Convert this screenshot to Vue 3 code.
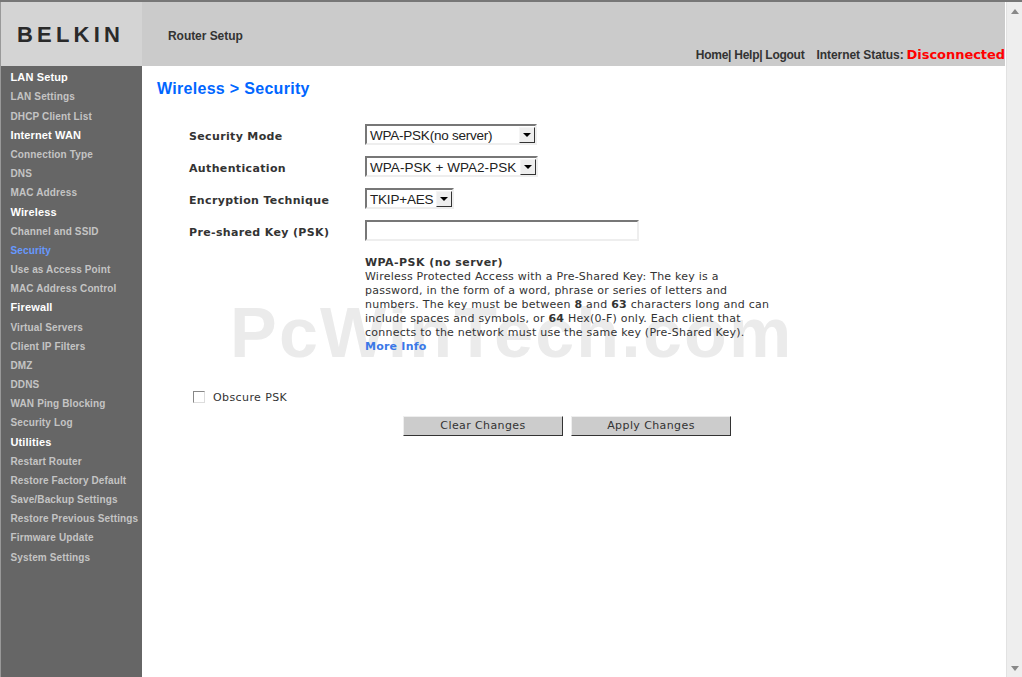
<script setup>
const nav = [
  { t: 'LAN Setup', h: 1 }, { t: 'LAN Settings' }, { t: 'DHCP Client List' },
  { t: 'Internet WAN', h: 1 }, { t: 'Connection Type' }, { t: 'DNS' }, { t: 'MAC Address' },
  { t: 'Wireless', h: 1 }, { t: 'Channel and SSID' }, { t: 'Security', a: 1 }, { t: 'Use as Access Point' }, { t: 'MAC Address Control' },
  { t: 'Firewall', h: 1 }, { t: 'Virtual Servers' }, { t: 'Client IP Filters' }, { t: 'DMZ' }, { t: 'DDNS' }, { t: 'WAN Ping Blocking' }, { t: 'Security Log' },
  { t: 'Utilities', h: 1 }, { t: 'Restart Router' }, { t: 'Restore Factory Default' }, { t: 'Save/Backup Settings' }, { t: 'Restore Previous Settings' }, { t: 'Firmware Update' }, { t: 'System Settings' }
]
const selects = [
  { label: 'Security Mode', value: 'WPA-PSK(no server)', w: 172, ls: -0.23 },
  { label: 'Authentication', value: 'WPA-PSK + WPA2-PSK', w: 173, ls: 0.05 },
  { label: 'Encryption Technique', value: 'TKIP+AES', w: 89, ls: -0.2 }
]
</script>

<template>
  <div class="page">
    <div class="frame">
      <header class="top">
        <div class="logo">BELKIN</div>
        <div class="title">Router Setup</div>
        <div class="links">
          <span class="nav">Home| Help| Logout</span>
          <span class="status">Internet Status:</span>
          <b class="disc">Disconnected</b>
        </div>
      </header>
      <div class="body">
        <nav class="side">
          <a v-for="n in nav" :key="n.t" :class="{ h: n.h, a: n.a }">{{ n.t }}</a>
        </nav>
        <main class="main">
          <div class="mark">PcWinTech.com</div>
          <h1>Wireless &gt; Security</h1>
          <div class="form">
            <template v-for="s in selects" :key="s.label">
              <label>{{ s.label }}</label>
              <div class="select" :style="{ width: s.w + 'px' }">
                <span class="val" :style="{ letterSpacing: s.ls + 'px' }">{{ s.value }}</span>
                <i class="arrow"></i>
              </div>
            </template>
            <label>Pre-shared Key (PSK)</label>
            <div class="input"></div>
          </div>
          <div class="help">
            <b class="head">WPA-PSK (no server)</b><br>
            Wireless Protected Access with a Pre-Shared Key: The key is a<br>
            password, in the form of a word, phrase or series of letters and<br>
            numbers. The key must be between <b>8</b> and <b>63</b> characters long and can<br>
            include spaces and symbols, or <b>64</b> Hex(0-F) only. Each client that<br>
            connects to the network must use the same key (Pre-Shared Key).<br>
            <b class="more">More Info</b>
          </div>
          <div class="obscure"><i class="check"></i><span>Obscure PSK</span></div>
          <div class="buttons">
            <div class="btn">Clear Changes</div>
            <div class="btn">Apply Changes</div>
          </div>
        </main>
      </div>
    </div>
    <div class="scroll"><i class="up"></i><i class="down"></i></div>
  </div>
</template>

<style>
html, body { margin: 0; overflow: hidden; }
</style>
<style scoped>
.page { width: 1022px; height: 677px; display: flex; overflow: hidden; background: #fff; font-family: "Liberation Sans", Arial, sans-serif; border-top: 2px solid #777; box-sizing: border-box; }
.frame { width: 1005px; margin-right: 1px; border-left: 1px solid #999; box-sizing: border-box; display: flex; flex-direction: column; }
.scroll { width: 16px; background: #eee; border-left: 1px solid #e2e2e2; box-sizing: border-box; padding: 7px 0 6px 4px; display: flex; flex-direction: column; justify-content: space-between; }
.up, .down { display: block; width: 0; height: 0; border: 4px solid transparent; }
.up { border-bottom: 5px solid #888; border-top: 0; }
.down { border-top: 5px solid #888; border-bottom: 0; }
.top { height: 64px; background: #cbcbcb; display: flex; flex: none; position: relative; }
.logo { width: 141px; background: #d4d4d4; box-sizing: border-box; padding: 21px 0 0 16px; font: bold 22px/24px "Liberation Sans", sans-serif; letter-spacing: 4.2px; color: #2a2a2a; }
.title { margin: 27px 0 0 26px; font: bold 12px/14px "Liberation Sans", sans-serif; color: #333; letter-spacing: -.05px; }
.links { margin-left: auto; padding-top: 46px; font: bold 12px/14px "Liberation Sans", sans-serif; color: #333; display: flex; white-space: nowrap; }
.nav { letter-spacing: -.27px; }
.status { margin-left: 12px; letter-spacing: -.05px; }
.disc { margin-left: 3px; font: bold 13px/14px "DejaVu Sans", sans-serif; color: #f00; letter-spacing: -.05px; }
.body { flex: 1; display: flex; min-height: 0; }
.side { width: 141px; background: #666; padding: 2.3px 0 0 9.5px; box-sizing: border-box; flex: none; }
.side a { display: block; height: 19.18px; font: bold 10px/19px "Liberation Sans", sans-serif; color: #c4c4c4; white-space: nowrap; letter-spacing: .13px; }
.side a.h { font-size: 11px; color: #fff; }
.side a.a { color: #6699ff; }
.main { flex: 1; position: relative; padding: 12px 0 0 15px; }
.mark { position: absolute; left: 88px; top: 232px; font: bold 70px/70px "Liberation Sans", sans-serif; color: #ebebeb; white-space: nowrap; letter-spacing: 2.2px; }
h1 { position: relative; margin: 0; font: bold 16px/22px "Liberation Sans", sans-serif; color: #0066ff; letter-spacing: .3px; }
.form { position: relative; display: grid; grid-template-columns: 176px 1fr; row-gap: 10px; margin: 24px 0 0 32px; align-items: start; }
label { height: 22px; font: bold 11px/26px "DejaVu Sans", sans-serif; color: #333; letter-spacing: .35px; white-space: nowrap; }
.select { height: 21px; box-sizing: border-box; border: 2px solid; border-color: #777 #eee #eee #777; display: flex; align-items: center; background: #fff; padding-left: 3px; justify-content: space-between; font: 13.5px/16px "Liberation Sans", sans-serif; color: #222; white-space: nowrap; }
.val { padding-top: 2px; }
.arrow { flex: none; width: 16px; height: 16px; background: #eee; box-sizing: border-box; border: 1px solid; border-color: #f5f5f5 #333 #333 #f5f5f5; position: relative; }
.arrow::after { content: ""; position: absolute; left: 3px; top: 5px; border: 4px solid transparent; border-top: 4px solid #000; border-bottom: 0; }
.input { width: 274px; height: 21px; box-sizing: border-box; border: 2px solid; border-color: #777 #eee #eee #777; background: #fff; }
.help { position: relative; margin: 14px 0 0 208px; font: 11px/14px "DejaVu Sans", sans-serif; color: #333; white-space: nowrap; letter-spacing: .23px; }
.head { letter-spacing: .45px; }
.more { color: #3b78e7; }
.obscure { position: relative; display: flex; align-items: center; margin: 37px 0 0 36px; font: 11px/14px "DejaVu Sans", sans-serif; color: #333; letter-spacing: .4px; }
.check { width: 12px; height: 12px; margin-top: -2px; box-sizing: border-box; border: 1px solid; border-color: #888 #ddd #ddd #888; margin-right: 8px; background: #fff; }
.buttons { position: relative; display: flex; gap: 8px; margin: 11px 0 0 246px; }
.btn { width: 160px; height: 20px; box-sizing: border-box; border: 1px solid; border-color: #eee #333 #333 #eee; background: #ccc; text-align: center; font: 11px/18px "DejaVu Sans", sans-serif; color: #333; letter-spacing: .4px; }
</style>
